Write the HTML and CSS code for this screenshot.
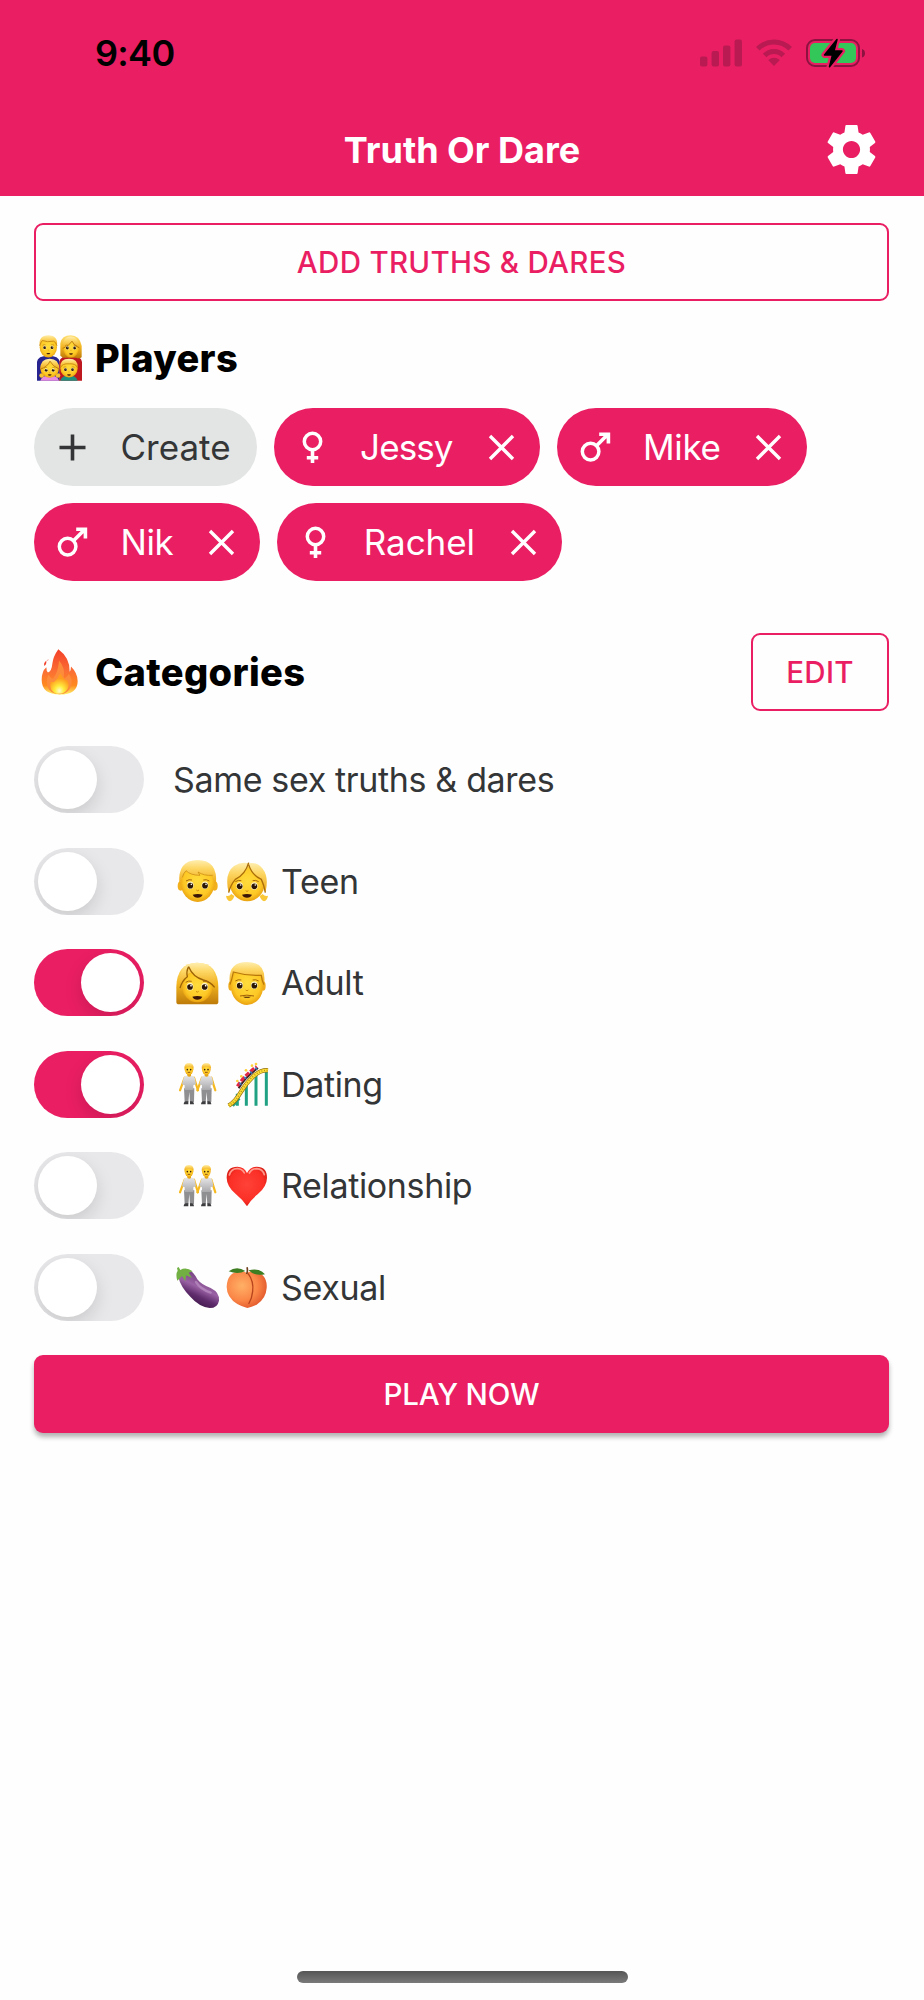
FILE: index.html
```
<!DOCTYPE html>
<html lang="en">
<head>
    <meta charset="UTF-8">
    <meta name="viewport" content="width=device-width, initial-scale=1.0">
    <title>Truth Or Dare</title>
    <link rel="stylesheet" href="styles.css">
</head>
<body>
    <!-- shared gradients and icons -->
    <svg class="defs" width="0" height="0">
        <defs>
            <radialGradient id="skin" cx="50%" cy="45%" r="58%">
                <stop offset="0" stop-color="#ffdc3c"/>
                <stop offset="0.7" stop-color="#fdc825"/>
                <stop offset="1" stop-color="#e59a0c"/>
            </radialGradient>
            <linearGradient id="hair" x1="0" y1="0" x2="0" y2="1">
                <stop offset="0" stop-color="#ffeeb0"/>
                <stop offset="0.35" stop-color="#fdd663"/>
                <stop offset="1" stop-color="#eda612"/>
            </linearGradient>
            <linearGradient id="longHair" x1="0" y1="0" x2="0" y2="1">
                <stop offset="0" stop-color="#ffe27a"/>
                <stop offset="0.5" stop-color="#f3b620"/>
                <stop offset="1" stop-color="#bd7a08"/>
            </linearGradient>
            <linearGradient id="shirt" x1="0" y1="0" x2="0" y2="1">
                <stop offset="0" stop-color="#e6e6e8"/>
                <stop offset="1" stop-color="#a9a9ac"/>
            </linearGradient>
            <linearGradient id="flame" x1="0" y1="0" x2="0" y2="1">
                <stop offset="0" stop-color="#f3402a"/>
                <stop offset="0.5" stop-color="#fb7034"/>
                <stop offset="0.8" stop-color="#ff8a1e"/>
                <stop offset="1" stop-color="#fff36a"/>
            </linearGradient>
            <radialGradient id="flameCore" cx="50%" cy="85%" r="60%">
                <stop offset="0" stop-color="#fffbd0"/>
                <stop offset="0.4" stop-color="#ffec3d"/>
                <stop offset="1" stop-color="#ff9c20"/>
            </radialGradient>
            <radialGradient id="heart" cx="50%" cy="45%" r="60%">
                <stop offset="0" stop-color="#ff4238"/>
                <stop offset="0.7" stop-color="#fb2f26"/>
                <stop offset="1" stop-color="#cf1a12"/>
            </radialGradient>
            <linearGradient id="eggplant" x1="0.7" y1="0.1" x2="0.3" y2="0.9">
                <stop offset="0" stop-color="#6b3a78"/>
                <stop offset="0.45" stop-color="#9a62a4"/>
                <stop offset="0.7" stop-color="#5f2c6c"/>
                <stop offset="1" stop-color="#3d1748"/>
            </linearGradient>
            <radialGradient id="peach" cx="38%" cy="40%" r="65%">
                <stop offset="0" stop-color="#ffb066"/>
                <stop offset="0.6" stop-color="#fb8747"/>
                <stop offset="1" stop-color="#e2592c"/>
            </radialGradient>
            <g id="face">
                <ellipse cx="-22" cy="0" rx="10" ry="11.5" fill="#fff4c4"/>
                <ellipse cx="22" cy="0" rx="10" ry="11.5" fill="#fff4c4"/>
                <circle cx="-22" cy="1" r="8.5" fill="#2b1606"/>
                <circle cx="22" cy="1" r="8.5" fill="#2b1606"/>
                <circle cx="-19" cy="-3" r="2.5" fill="#fff"/>
                <circle cx="25" cy="-3" r="2.5" fill="#fff"/>
                <path d="M-35 -13q9 -6 18 -3M35 -13q-9 -6 -18 -3" fill="none" stroke="#a8690b" stroke-width="3"/>
                <path d="M-4 14q4 5 8 0" fill="none" stroke="#cf8a10" stroke-width="3"/>
            </g>
            <g id="mouth">
                <path d="M-15 0q15 -4 30 0q-4 9 -15 9t-15 -9z" fill="#3a1406"/>
            </g>
        </defs>
        <symbol id="female" viewBox="0 0 39 39">
            <circle cx="19.5" cy="13.5" r="8.2" fill="none" stroke="currentColor" stroke-width="3.5"/>
            <path d="M19.5 22v13M13.8 29.8h11.4" fill="none" stroke="currentColor" stroke-width="3.6"/>
        </symbol>
        <symbol id="male" viewBox="0 0 39 39">
            <circle cx="14.6" cy="23.6" r="8.3" fill="none" stroke="currentColor" stroke-width="3.5"/>
            <path d="M20.5 17.7L32 6.2M23.2 6.2h9.2v9.4" fill="none" stroke="currentColor" stroke-width="3.6"/>
        </symbol>
        <symbol id="plus" viewBox="0 0 39 39">
            <path d="M19.5 6.5v26M6.5 19.5h26" fill="none" stroke="currentColor" stroke-width="3.6"/>
        </symbol>
        <symbol id="close" viewBox="0 0 39 39">
            <path d="M8 8l23 23M31 8L8 31" fill="none" stroke="currentColor" stroke-width="3.4"/>
        </symbol>
        <symbol id="couple" viewBox="0 0 126 126">
            <g id="person">
                <path d="M26 44L12 82M54 44L66 82" stroke="#f6b91e" stroke-width="6.5" stroke-linecap="round"/>
                <path d="M24 76h31l-1 41H42l-2 -30-3 30H26z" fill="#8f8f92"/>
                <path d="M30 38h19q8 2 9 14l2 12-8 3v14H26V67l-8-3 3-12q2-12 9-14z" fill="url(#shirt)"/>
                <path d="M23 124q1-9 7-9h7v9zM54 124q-1-9-7-9h-5v9z" fill="#3d3d40"/>
                <path d="M34 32h11v7q-5 5-11 0z" fill="#e7a412"/>
                <ellipse cx="39" cy="19" rx="13" ry="17" fill="url(#skin)"/>
                <path d="M25 17Q24 0 39 0t14 17q-4-6-13-6t-15 6z" fill="url(#hair)"/>
                <circle cx="34" cy="20" r="2.4" fill="#3a1e08"/>
                <circle cx="44" cy="20" r="2.4" fill="#3a1e08"/>
                <path d="M35 28h8" stroke="#7a3810" stroke-width="2.5"/>
            </g>
            <use href="#person" x="52"/>
        </symbol>
    </svg>

    <header class="header">
        <div class="status-bar">
            <span class="time">9:40</span>
            <div class="status-icons">
                <svg width="42" height="28" viewBox="0 0 42 28" fill="#b91a52">
                    <rect x="0" y="17.5" width="7.4" height="10" rx="2"/>
                    <rect x="11.6" y="12" width="7.4" height="15.5" rx="2"/>
                    <rect x="23" y="6.5" width="7.4" height="21" rx="2"/>
                    <rect x="34.6" y="0.5" width="7.4" height="27" rx="2"/>
                </svg>
                <svg width="36" height="28" viewBox="0 0 36 28" fill="none" stroke="#b91a52" stroke-width="5">
                    <path d="M1.8 9.8Q8.500 3 18 3t16.200 6.800"/>
                    <path d="M8.700 16.600Q12.600 12.600 18 12.600t9.300 4"/>
                    <path d="M18 27l-5.800-6Q18 16.400 23.800 21z" fill="#b91a52" stroke="none"/>
                </svg>
                <svg width="60" height="30" viewBox="0 0 60 30">
                    <rect x="1" y="2" width="52" height="26" rx="8" fill="none" stroke="#8d1240" stroke-width="2"/>
                    <rect x="4" y="5" width="46" height="20" rx="5" fill="#33c759"/>
                    <path d="M56 11q3 1 3 4.300t-3 4.300z" fill="#8d1240"/>
                    <path d="M31 1.500L18.500 17h8l-3 11.800L36 13h-8z" fill="#000" stroke="#ea1e63" stroke-width="6" stroke-linejoin="round" paint-order="stroke"/>
                    <path d="M31 1.500L18.500 17h8l-3 11.800L36 13h-8z" stroke="#000" stroke-width="1.500" stroke-linejoin="round"/>
                </svg>
            </div>
        </div>
        <div class="title-bar">
            <h1>Truth Or Dare</h1>
            <svg class="settings" width="59" height="59" viewBox="0 0 24 24" fill="#fff">
                <path d="M19.43 12.98c.04-.32.07-.64.07-.98s-.03-.66-.07-.98l2.11-1.65c.19-.15.24-.42.12-.64l-2-3.46c-.12-.22-.39-.3-.61-.22l-2.49 1c-.52-.4-1.08-.73-1.69-.98l-.38-2.65C14.46 2.18 14.25 2 14 2h-4c-.25 0-.46.18-.49.42l-.38 2.65c-.61.25-1.17.59-1.69.98l-2.49-1c-.23-.09-.49 0-.61.22l-2 3.46c-.13.22-.07.49.12.64l2.11 1.65c-.04.32-.07.65-.07.98s.03.66.07.98l-2.11 1.65c-.19.15-.24.42-.12.64l2 3.46c.12.22.39.3.61.22l2.49-1c.52.4 1.08.73 1.69.98l.38 2.65c.03.24.24.42.49.42h4c.25 0 .46-.18.49-.42l.38-2.65c.61-.25 1.17-.59 1.69-.98l2.49 1c.23.09.49 0 .61-.22l2-3.46c.12-.22.07-.49-.12-.64l-2.11-1.65zM12 15.5c-1.93 0-3.5-1.57-3.5-3.5s1.57-3.5 3.5-3.5 3.5 1.57 3.5 3.5-1.57 3.5-3.5 3.5z"/>
            </svg>
        </div>
    </header>

    <main class="content">
        <button class="btn btn-outline">ADD TRUTHS &amp; DARES</button>

        <div class="section-title players-title">
            <svg width="45" height="46" viewBox="0 0 135 137">
                <path d="M0 137V80Q2 62 34 62t34 18v57z" fill="#27248f"/>
                <path d="M67 137V80q2-18 34-18t34 18v57z" fill="#bd1820"/>
                <path d="M70 62V24Q74 0 101 0t33 32v34q-8 6-16 2H78z" fill="url(#longHair)"/>
                <ellipse cx="34" cy="36" rx="26" ry="31" fill="url(#skin)"/>
                <path d="M8 32Q4 0 34 0t26 32q-4-12-10-14-20 4-34-2-4 4-8 16z" fill="url(#hair)"/>
                <path d="M8 32q4-12 8-16 14 6 34 2 6 2 10 14" fill="none" stroke="#c4830c" stroke-width="2.5"/>
                <ellipse cx="102" cy="38" rx="24" ry="29" fill="url(#skin)"/>
                <path d="M77 40Q76 4 101 4t26 34q-16-5-22-20-10 16-28 22z" fill="url(#hair)"/>
                <path d="M77 40q18-6 28-22 6 15 22 20" fill="none" stroke="#b4740a" stroke-width="2.5"/>
                <use href="#face" transform="translate(34 37) scale(0.5)"/>
                <use href="#mouth" transform="translate(34 54) scale(0.4)"/>
                <use href="#face" transform="translate(102 38) scale(0.5)"/>
                <use href="#mouth" transform="translate(102 55) scale(0.4)"/>
                <path d="M10 137q4-16 28-16t28 16z" fill="#e88be0"/>
                <path d="M70 137q4-16 26-16t26 16z" fill="#1f8f80"/>
                <circle cx="14" cy="121" r="7" fill="#f6c335"/>
                <circle cx="63" cy="121" r="7" fill="#f6c335"/>
                <ellipse cx="38" cy="100" rx="28" ry="28" fill="url(#skin)"/>
                <path d="M10 102Q10 71 38 71t29 31q-20-8-28-24-8 18-29 24z" fill="url(#hair)"/>
                <path d="M10 102q21-6 29-24 8 16 28 24" fill="none" stroke="#b4740a" stroke-width="2.5"/>
                <ellipse cx="96" cy="100" rx="26" ry="27" fill="url(#skin)"/>
                <path d="M70 98q-2-27 26-27t26 27q-6-14-26-12-20-2-26 12z" fill="url(#hair)"/>
                <path d="M70 98q6-14 26-12 20-2 26 12" fill="none" stroke="#c4830c" stroke-width="2.5"/>
                <use href="#face" transform="translate(38 105) scale(0.48)"/>
                <use href="#mouth" transform="translate(38 118) scale(0.4)"/>
                <use href="#face" transform="translate(96 103) scale(0.48)"/>
                <use href="#mouth" transform="translate(96 118) scale(0.4)"/>
            </svg>
            <h2>Players</h2>
        </div>

        <div class="players">
            <div class="chip chip-create">
                <svg width="39" height="39"><use href="#plus"/></svg>
                <span>Create</span>
            </div>
            <div class="chip chip-tight">
                <svg width="39" height="39"><use href="#female"/></svg>
                <span>Jessy</span>
                <svg width="39" height="39"><use href="#close"/></svg>
            </div>
            <div class="chip">
                <svg width="39" height="39"><use href="#male"/></svg>
                <span>Mike</span>
                <svg width="39" height="39"><use href="#close"/></svg>
            </div>
            <div class="chip">
                <svg width="39" height="39"><use href="#male"/></svg>
                <span>Nik</span>
                <svg width="39" height="39"><use href="#close"/></svg>
            </div>
            <div class="chip chip-wide">
                <svg width="39" height="39"><use href="#female"/></svg>
                <span>Rachel</span>
                <svg width="39" height="39"><use href="#close"/></svg>
            </div>
        </div>

        <div class="categories-bar">
            <div class="section-title">
                <svg width="45" height="46" viewBox="-14 0 135 137">
                    <path d="M50 0Q86 26 84 68q4-4 4-16 20 20 20 44 0 40-54 40T0 92Q0 66 14 54q0 12 5 16Q30 66 32 44T50 0z" fill="url(#flame)"/>
                    <path d="M14 34q-8 6-7 16 8-2 7-16zM20 30q-4 2-3 5 4-1 3-5z" fill="#f3402a"/>
                    <path d="M52 34q20 22 14 54 12-4 15-14 12 14 8 34-8 27-36 27-30 0-36-26-4-20 4-32 4 10 13 12 16-22 18-55z" fill="#fd8b3c"/>
                    <path d="M56 72q6 12 14 20l8 2q6 14 0 25-8 15-25 15-18 0-25-14-5-11-1-22 8 2 12-1 9-9 17-25z" fill="url(#flameCore)"/>
                </svg>
                <h2>Categories</h2>
            </div>
            <button class="btn btn-outline btn-edit">EDIT</button>
        </div>

        <div class="categories">
            <div class="category">
                <div class="switch"></div>
                <span>Same sex truths &amp; dares</span>
            </div>
            <div class="category">
                <div class="switch"></div>
                <div class="emojis">
                    <!-- boy -->
                    <svg width="42" height="42" viewBox="0 0 126 126">
                        <ellipse cx="14" cy="78" rx="9" ry="14" fill="#f2b01c"/>
                        <ellipse cx="116" cy="78" rx="9" ry="14" fill="#f2b01c"/>
                        <ellipse cx="65" cy="68" rx="51" ry="58" fill="url(#skin)"/>
                        <path d="M10 72Q4 0 65 0t55 72q-8-6-10-26-26 2-44-10l6 10Q44 46 30 32q-8 8-11 20t-9 20z" fill="url(#hair)"/>
                        <path d="M19 52q3-12 11-20 14 14 42 14l-6-10q18 12 44 10" fill="none" stroke="#cf9016" stroke-width="2.5"/>
                        <use href="#face" transform="translate(65 76)"/>
                        <use href="#mouth" x="65" y="104"/>
                    </svg>
                    <!-- girl -->
                    <svg width="42" height="42" viewBox="0 0 126 126">
                        <path d="M16 102q-6 8-16 5 2 14 12 17 10-4 13-16zM110 102q6 8 16 5-2 14-12 17-10-4-13-16z" fill="#f9c738"/>
                        <ellipse cx="64" cy="70" rx="52" ry="54" fill="url(#skin)"/>
                        <path d="M8 98Q-6 40 24 18 46 4 68 10q24-6 42 16 20 26 8 72-4-24-12-40-26-12-38-40Q54 44 28 58 14 74 8 98z" fill="url(#hair)"/>
                        <path d="M68 8Q58 44 28 58 14 74 8 98M68 14q10 32 38 44 8 16 12 40" fill="none" stroke="#a96c08" stroke-width="4"/>
                        <use href="#face" transform="translate(63 78)"/>
                        <use href="#mouth" x="63" y="104"/>
                    </svg>
                </div>
                <span>Teen</span>
            </div>
            <div class="category">
                <div class="switch on"></div>
                <div class="emojis">
                    <!-- woman -->
                    <svg width="42" height="42" viewBox="0 0 126 126">
                        <path d="M1 120V76Q2 2 64 2t63 74v44q0 7-8 7H9q-8 0-8-7z" fill="url(#longHair)"/>
                        <ellipse cx="64" cy="74" rx="45" ry="47" fill="url(#skin)"/>
                        <path d="M12 78Q2 2 64 2t52 74q-12-16-34-22-32-10-44-40-8 14-4 30-16 12-22 34z" fill="url(#hair)"/>
                        <path d="M38 14q12 30 44 40 22 6 34 22M38 14q-8 14-4 30-16 12-22 34" fill="none" stroke="#9c6206" stroke-width="4"/>
                        <use href="#face" transform="translate(64 74)"/>
                        <use href="#mouth" x="64" y="104"/>
                    </svg>
                    <!-- man -->
                    <svg width="42" height="42" viewBox="0 0 126 126">
                        <ellipse cx="14" cy="72" rx="7" ry="14" fill="#eeab1b"/>
                        <ellipse cx="112" cy="72" rx="7" ry="14" fill="#eeab1b"/>
                        <path d="M14 60Q10 10 63 10t49 50q2 36-16 54-16 15-33 15t-33-15Q12 96 14 60z" fill="url(#skin)"/>
                        <path d="M12 68Q2 0 63 0t51 68q-6-10-8-28-44 2-84-10-4 22-10 38z" fill="url(#hair)"/>
                        <path d="M12 68q6-16 10-38 40 12 84 10 2 18 8 28" fill="none" stroke="#b87809" stroke-width="3.5"/>
                        <use href="#face" transform="translate(63 70)"/>
                        <path d="M42 102q20-5 42 0" fill="none" stroke="#a0600a" stroke-width="3"/>
                        <path d="M51 104q12 7 24 0z" fill="#3a1406"/>
                    </svg>
                </div>
                <span>Adult</span>
            </div>
            <div class="category">
                <div class="switch on"></div>
                <div class="emojis">
                    <svg width="42" height="42"><use href="#couple"/></svg>
                    <!-- roller coaster -->
                    <svg width="42" height="42" viewBox="0 0 126 126">
                        <path d="M34 92v36M61 60v68M90 36v92M121 26v102M20 128l20-22" fill="none" stroke="#21a184" stroke-width="9"/>
                        <path d="M8 128Q28 116 44 88T82 40t44-18" fill="none" stroke="#93700f" stroke-width="13"/>
                        <path d="M8 128Q28 116 44 88T82 40t44-18" fill="none" stroke="#ffdf35" stroke-width="9"/>
                        <path d="M8 128Q28 116 44 88T82 40t44-18" fill="none" stroke="#b58d18" stroke-width="4" stroke-dasharray="3 5"/>
                        <path d="M38 76Q56 44 96 15" fill="none" stroke="#3c2320" stroke-width="6"/>
                        <path d="M34 70Q52 40 92 10" fill="none" stroke="#df2846" stroke-width="9" stroke-dasharray="15 5"/>
                        <g fill="#ffd13d">
                            <circle cx="34" cy="54" r="4"/><circle cx="46" cy="40" r="4"/><circle cx="60" cy="22" r="4"/><circle cx="78" cy="8" r="4"/><circle cx="90" cy="3" r="4"/>
                        </g>
                        <path d="M40 60l6 5M55 42l6 5M72 26l6 5M87 14l6 5" stroke="#377bc0" stroke-width="5"/>
                    </svg>
                </div>
                <span>Dating</span>
            </div>
            <div class="category">
                <div class="switch"></div>
                <div class="emojis">
                    <svg width="42" height="42"><use href="#couple"/></svg>
                    <!-- heart -->
                    <svg width="42" height="42" viewBox="0 0 126 126">
                        <path d="M63 124Q52 106 30 88 2 64 2 38 2 5 34 5q20 0 29 19Q72 5 92 5q31 0 31 33 0 26-28 50-22 18-32 36z" fill="url(#heart)"/>
                        <path d="M10 30Q16 10 35 11q14 1 20 13M70 24q8-13 22-13 18 1 23 18" fill="none" stroke="#ff978b" stroke-width="5" stroke-linecap="round"/>
                    </svg>
                </div>
                <span>Relationship</span>
            </div>
            <div class="category">
                <div class="switch"></div>
                <div class="emojis">
                    <!-- eggplant -->
                    <svg width="42" height="42" viewBox="0 0 126 126">
                        <path d="M6 30Q14 12 38 12q14 4 26 28 12 16 40 26 28 14 25 38-4 22-28 22-32-4-58-34Q14 64 6 30z" fill="url(#eggplant)"/>
                        <path d="M60 48q14 22 44 32" fill="none" stroke="#c39acb" stroke-width="7" stroke-linecap="round" opacity="0.6"/>
                        <path d="M3 6l5-3 5 9Q30 2 50 16l-12 4 10 16-18-8-2 18-10-16-14 14Q-2 24 5 14z" fill="#72b043"/>
                    </svg>
                    <!-- peach -->
                    <svg width="42" height="42" viewBox="0 0 126 126">
                        <path d="M62 20Q92 6 112 30q12 14 10 36-2 32-30 50-14 6-28 10-16-4-30-12Q2 94 2 62 4 20 40 16q12 0 22 4z" fill="url(#peach)"/>
                        <path d="M66 22q18 24 14 54-2 22-12 38" fill="none" stroke="#b8441d" stroke-width="4"/>
                        <path d="M8 16Q32-2 58 15q-22 12-50 1zM68 13q32-8 49 12-32 6-49-12z" fill="#3f7d22"/>
                        <path d="M62 24q4-10 1-20" fill="none" stroke="#70401e" stroke-width="5"/>
                    </svg>
                </div>
                <span>Sexual</span>
            </div>
        </div>

        <button class="btn btn-play">PLAY NOW</button>
    </main>

    <div class="home-indicator"></div>
</body>
</html>
```
FILE: styles.css
```
* {
    box-sizing: border-box;
}
body {
    display: flex;
    flex-direction: column;
    height: 2000px;
    margin: 0;
    font-family: Inter, "Liberation Sans", sans-serif;
    background-color: #fefefe;
    color: #333536;
    overflow: hidden;
}
h1, h2 {
    margin: 0;
}
svg {
    display: block;
    flex-shrink: 0;
    overflow: visible;
}
.defs {
    position: absolute;
}

/* Header */
.header {
    background-color: #ea1e63;
    height: 196px;
}
.status-bar {
    display: flex;
    justify-content: space-between;
    align-items: center;
    height: 105px;
    padding: 0 58px 0 95px;
}
.time {
    font-size: 36px;
    font-weight: 600;
    letter-spacing: -0.7px;
    color: #000;
}
.status-icons {
    display: flex;
    align-items: center;
    gap: 14px;
}
.title-bar {
    display: grid;
    grid-template-columns: 1fr auto 1fr;
    align-items: center;
    height: 89px;
    padding: 0 43px;
}
.title-bar h1 {
    grid-column: 2;
    font-size: 36px;
    font-weight: 700;
    color: #fff;
}
.settings {
    justify-self: end;
}

.content {
    padding: 27px 35px 0 34px;
}

/* Buttons */
.btn {
    display: flex;
    align-items: center;
    justify-content: center;
    width: 100%;
    height: 78px;
    border: none;
    border-radius: 9px;
    font-family: inherit;
    font-size: 29.5px;
    font-weight: 500;
    letter-spacing: 0.3px;
}
.btn-outline {
    background: none;
    border: 2px solid #ea1e63;
    color: #ea1e63;
}
.btn-edit {
    width: 138px;
}
.btn-play {
    margin-top: 34.5px;
    background-color: #ea1e63;
    color: #fff;
    letter-spacing: -0.1px;
    box-shadow: 0 4px 5px rgba(0, 0, 0, 0.3);
}

/* Section titles */
.section-title {
    display: flex;
    align-items: center;
    gap: 13px;
    padding-left: 3px;
    color: #000;
}
.section-title h2 {
    font-size: 38px;
    font-weight: 800;
    letter-spacing: 0.35px;
}
.players-title {
    height: 60px;
    margin: 27px 0 20px;
}

/* Players */
.players {
    display: flex;
    flex-wrap: wrap;
    gap: 17px;
}
.chip {
    display: flex;
    align-items: center;
    height: 78px;
    padding: 0 19px;
    border-radius: 40px;
    background-color: #ea1e63;
    color: #fff;
    font-size: 35px;
}
.chip span {
    margin: 0 29px 0 28.5px;
    letter-spacing: -0.4px;
}
.chip-tight span {
    letter-spacing: -0.9px;
}
.chip-wide span {
    letter-spacing: -0.1px;
}
.chip-create {
    background-color: #e3e5e4;
    color: #333536;
}
.chip-create span {
    margin-right: 7px;
    letter-spacing: 0;
}

/* Categories */
.categories-bar {
    display: flex;
    justify-content: space-between;
    align-items: center;
    margin-top: 52px;
}
.categories {
    display: flex;
    flex-direction: column;
    gap: 34.5px;
    margin-top: 35px;
}
.category {
    display: flex;
    align-items: center;
    height: 67px;
    font-size: 34px;
    letter-spacing: -0.35px;
}
.emojis {
    display: flex;
    gap: 8px;
    margin: 0 13px 0 3px;
}
.switch {
    width: 110px;
    height: 67px;
    margin-right: 29px;
    padding: 4px;
    border-radius: 34px;
    background-color: #e8e8ea;
    overflow: hidden;
}
.switch::before {
    content: "";
    display: block;
    width: 59px;
    height: 59px;
    border-radius: 50%;
    background-color: #fff;
    box-shadow: 0 7px 18px rgba(0, 0, 0, 0.13);
}
.switch.on {
    background-color: #ea1e63;
}
.switch.on::before {
    margin-left: auto;
}

.home-indicator {
    width: 331px;
    height: 12px;
    margin: auto auto 17px;
    border-radius: 6px;
    background: linear-gradient(#555, #7a7a7a);
}
```
